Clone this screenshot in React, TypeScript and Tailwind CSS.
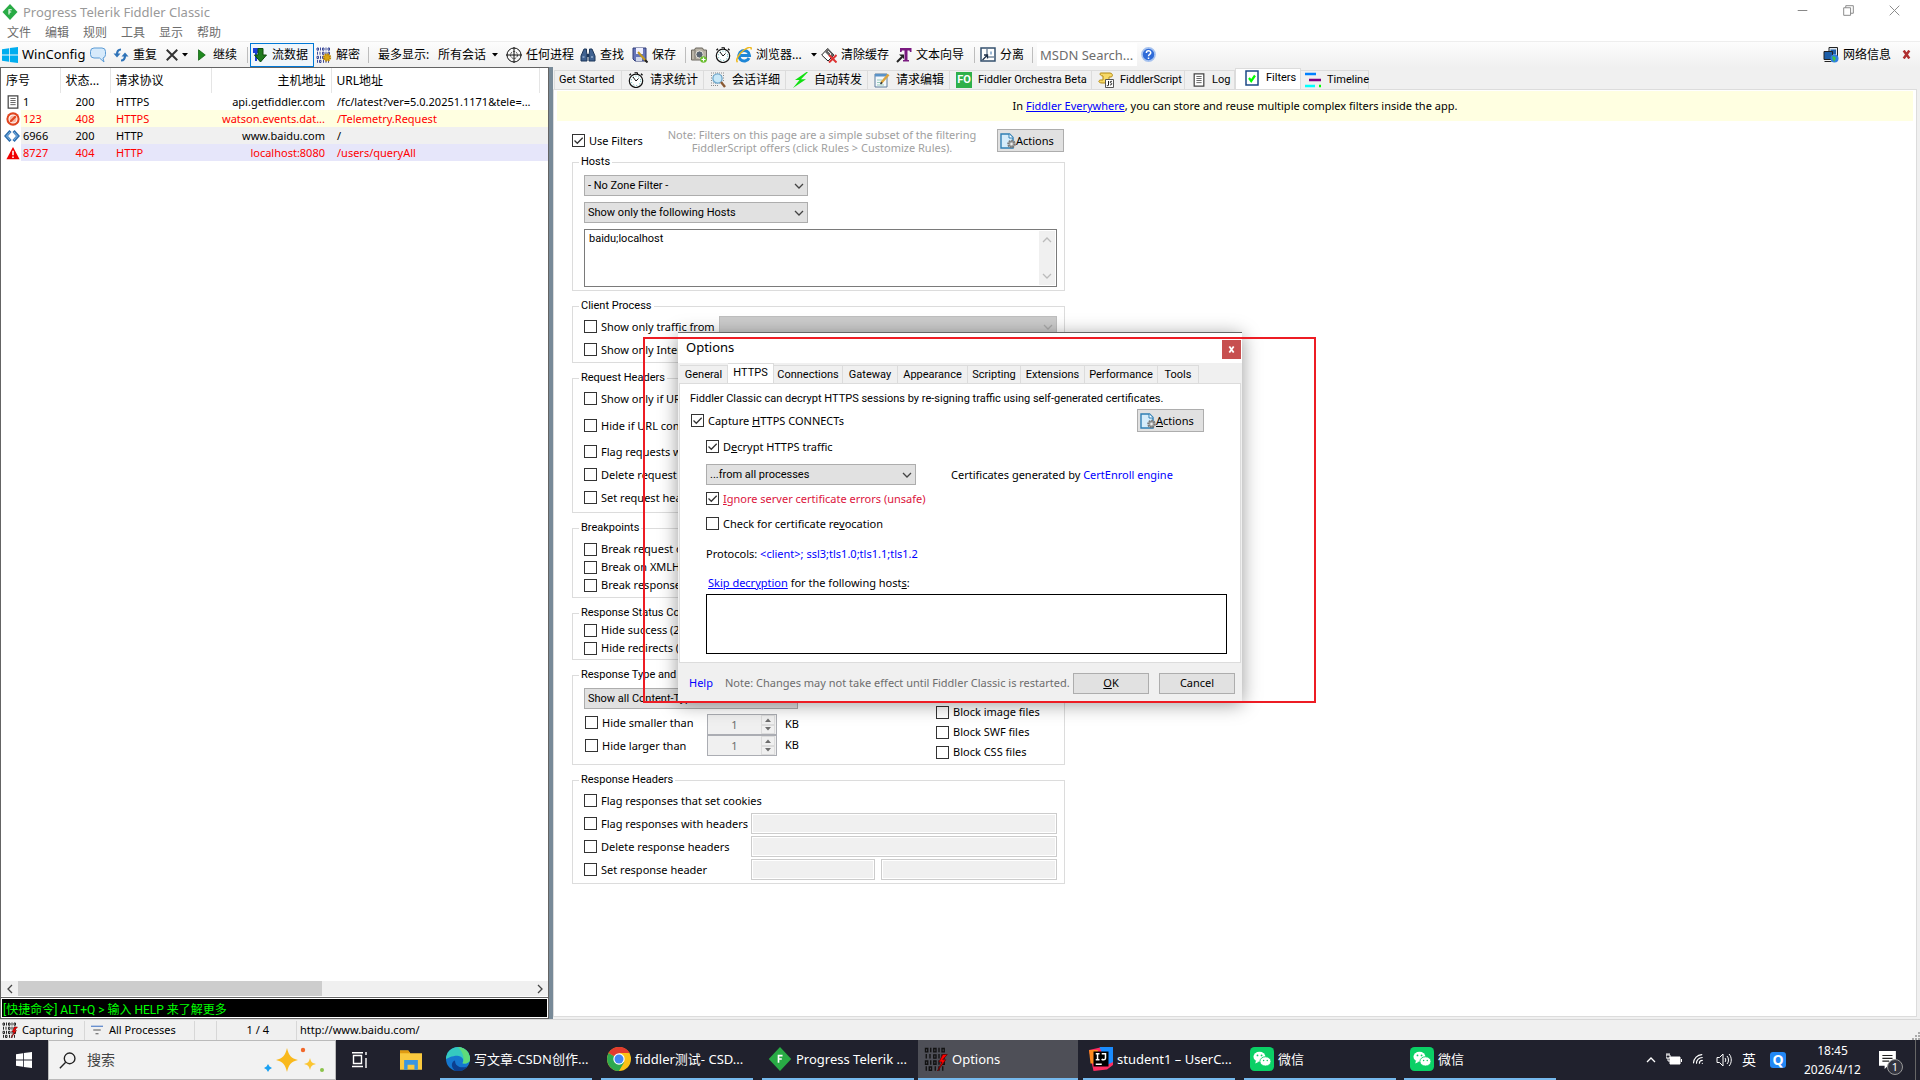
import type { ReactNode } from "react";
import { Wifi } from "lucide-react";

interface Session {
  id: string;
  result: string;
  protocol: string;
  host: string;
  url: string;
  icon: ReactNode;
  row: string;
}

const sessions: Session[] = [
  { id: "1", result: "200", protocol: "HTTPS", host: "api.getfiddler.com", url: "/fc/latest?ver=5.0.20251.1171&tele=...", icon: <DocIcon />, row: "text-black" },
  { id: "123", result: "408", protocol: "HTTPS", host: "watson.events.dat...", url: "/Telemetry.Request", icon: <BlockedIcon />, row: "text-[#ff0000] bg-[#ffffe1]" },
  { id: "6966", result: "200", protocol: "HTTP", host: "www.baidu.com", url: "/", icon: <CodeIcon />, row: "text-black bg-[#f0f0f0]" },
  { id: "8727", result: "404", protocol: "HTTP", host: "localhost:8080", url: "/users/queryAll", icon: <WarnIcon />, row: "text-[#ff0000] bg-[#e6e6fa]" },
];

/* ---------- icons ---------- */

function Svg({ children, className = "size-4" }: { children: ReactNode; className?: string }) {
  return (
    <svg viewBox="0 0 16 16" className={`shrink-0 ${className}`} fill="none">
      {children}
    </svg>
  );
}

function DocIcon() {
  return (
    <Svg className="size-[14px]">
      <path d="M2.5 1h11v14h-11z" fill="#fff" stroke="#444" strokeWidth="1.4" />
      <path d="M5 4h6M5 6.3h6M5 8.6h6M5 11h6" stroke="#555" />
    </Svg>
  );
}

function BlockedIcon() {
  return (
    <Svg className="size-[14px]">
      <circle cx="8" cy="8" r="7.6" fill="#e0451f" />
      <circle cx="8" cy="8" r="4.6" fill="#f8b9a6" stroke="#fff" strokeWidth="1.2" />
      <path d="m4.8 11.2 6.4-6.4" stroke="#e0451f" strokeWidth="2.4" />
    </Svg>
  );
}

function CodeIcon() {
  return (
    <Svg>
      <path d="M6.500 3 2 8l4.500 5M9.500 3 14 8l-4.500 5" stroke="#2f6fae" strokeWidth="3" />
      <path d="M6.200 4 2.600 8l3.600 4M9.800 4l3.600 4-3.600 4" stroke="#8ac0ee" />
    </Svg>
  );
}

function WarnIcon() {
  return (
    <Svg className="size-[14px]">
      <path d="M8 1 15.500 15H.5z" fill="#f00000" />
      <path d="M8 5.500v5M8 12v1.800" stroke="#fff" strokeWidth="1.800" />
    </Svg>
  );
}

function FiddlerIcon({ className }: { className?: string }) {
  return (
    <Svg className={className}>
      <path d="M8 0l7.500 8L8 16 .5 8z" fill="#29ab45" />
      <path d="M7 10.500V5.700h2.700M7 8h2.200" stroke="#fff" strokeWidth="1.100" />
    </Svg>
  );
}

function WindowsIcon({ color, className }: { color: string; className?: string }) {
  return (
    <Svg className={className}>
      <path d="M0 2.200 7 1.200v6.400H0zM7.800 1.100 16 0v7.600H7.800zM0 8.400h7v6.400l-7-1zM7.800 8.400H16V16l-8.200-1.100z" fill={color} />
    </Svg>
  );
}

function BubbleIcon() {
  return (
    <Svg>
      <path d="M4 1h8a3.500 3.500 0 0 1 3.500 3.500v3A3.500 3.500 0 0 1 13 11l1 4-4.500-4H4A3.500 3.500 0 0 1 .5 7.500v-3A3.500 3.500 0 0 1 4 1z" fill="#d6eafb" stroke="#5b9bd5" />
    </Svg>
  );
}

function ReplayIcon() {
  return (
    <Svg>
      <path d="M8 2.500C5 2.500 4 4 4 7.500M8 13.500c3 0 4-2 4-5" stroke="#2f73b8" strokeWidth="2.200" />
      <path d="M.5 6.500h7L4 10.500zM8.500 9.500h7L12 5.500z" fill="#2f73b8" />
    </Svg>
  );
}

function CrossIcon() {
  return (
    <Svg className="size-3">
      <path d="M1 1l14 14M15 1 1 15" stroke="#333" strokeWidth="2.600" />
    </Svg>
  );
}

function PlayIcon() {
  return (
    <Svg className="size-3">
      <path d="M2 1l9 7-9 7z" fill="#1f8a1f" stroke="#0d5e0d" />
    </Svg>
  );
}

function StreamIcon() {
  return (
    <Svg>
      <path d="M1 1h6v5H5v8H3V6H1z" fill="#1c3fd8" />
      <path d="M6 1.500h5V8h3.500L8.500 15 2.500 8H6z" fill="#1e7a1e" stroke="#0c4a0c" />
    </Svg>
  );
}

function BitsIcon({ gear = false, bolt = false, className }: { gear?: boolean; bolt?: boolean; className?: string }) {
  return (
    <Svg className={className}>
      <path
        d="M1 1h1.500v2.200H1zM4.500 .5v3M6.500 1H8v2.200H6.500zM10 .5v3M12 1h1.500v2.200H12zM1.500 4.700v3M4 4.700v3M6.500 5.200H8v2.200H6.500zM10 4.700v3M12 5.200h1.500v2.200H12zM1 9.300h1.500v2.200H1zM4.500 8.800v3M6.500 9.300H8v2.200H6.500zM10 8.800v3M12 9.300h1.500v2.200H12zM1.500 12.800v3M3.500 13.300H5v2.200H3.500zM7.500 12.800v3M10 12.800v3M12.500 12.800v3"
        stroke={gear ? "#27368f" : "#111"}
        strokeWidth=".9"
      />
      {gear && <circle cx="11" cy="10.500" r="3.200" fill="#d9a514" stroke="#b88408" strokeWidth="2" strokeDasharray="1.500 1" />}
      {bolt && <path d="M12.500 5 10 10h2l-3 6 5.500-7.500h-2L15.500 5z" fill="#f00" stroke="#600" strokeWidth=".5" />}
    </Svg>
  );
}

function TargetIcon() {
  return (
    <Svg>
      <circle cx="8" cy="8" r="7" stroke="#111" />
      <circle cx="8" cy="8" r="3.500" stroke="#444" strokeDasharray="2 1" />
      <path d="M8 0v16M0 8h16" stroke="#111" />
    </Svg>
  );
}

function BinocularsIcon() {
  return (
    <Svg>
      <path d="M4 2h2.500v3L7 7v7H1V9zM9.500 2H12l3 7v5H9V7l.5-2z" fill="#3f6190" stroke="#1d3658" />
      <path d="M7 7h2v3H7z" fill="#1d3658" />
      <path d="M2.500 10h2M11 10h2" stroke="#bcd2ee" />
    </Svg>
  );
}

function SaveIcon() {
  return (
    <Svg>
      <path d="M1 1h13v13H3l-2-2z" fill="#6675b8" stroke="#303c78" />
      <path d="M4 1h7v6H4z" fill="#eef" />
      <path d="M4 10h6v4H4z" fill="#cfd6ea" />
      <path d="m6 5 8 9" stroke="#c49a1c" strokeWidth="2" />
      <path d="m13 13 2.500 2.500" stroke="#222" strokeWidth="2" />
    </Svg>
  );
}

function CameraIcon() {
  return (
    <Svg>
      <path d="M.5 3h3l1-2h7l1 2h3v10H.5z" fill="#b9b3a6" stroke="#6b675e" />
      <path d="M4 3v9" stroke="#77736a" />
      <circle cx="8.500" cy="7.500" r="3.600" fill="#59636f" stroke="#e6e3dc" />
      <circle cx="12.500" cy="12.500" r="3.300" fill="#6abf2e" />
      <path d="M12.500 10.500v4M10.500 12.500h4" stroke="#fff" strokeWidth="1.200" />
    </Svg>
  );
}

function ClockIcon() {
  return (
    <Svg>
      <path d="M6.500 .7h3v1.500" stroke="#111" />
      <circle cx="8" cy="8.800" r="6.700" fill="#fff" stroke="#111" strokeWidth="1.200" />
      <circle cx="8" cy="8.800" r="4.700" stroke="#4aa" strokeDasharray="1 2" />
      <path d="M5 5 8 9l2.500-2.500" stroke="#111" />
      <path d="m13 1.800 1.500 1.500M3 1.800 1.500 3.300" stroke="#111" strokeWidth="1.400" />
    </Svg>
  );
}

function IeIcon() {
  return (
    <Svg>
      <path d="M13 11A5.300 5.300 0 1 1 13.500 8.500H4.500" stroke="#1e86d6" strokeWidth="3" />
      <path d="M1.500 15.300C-.8 13 3 6.500 8 3s8-3.500 7-.5" stroke="#f0b91d" strokeWidth="1.500" />
    </Svg>
  );
}

function EraseIcon() {
  return (
    <Svg>
      <path d="M.7 8l6-6.500L13 8l-6 6z" fill="#fff" stroke="#222" />
      <path d="M4 5l3-3.500L13 8l-3 3z" fill="#666" />
      <path d="m7 4 3 3-2 2" stroke="#eee" />
      <path d="m8 8 7.500 7.500M15.500 8 8 15.500" stroke="#d33" strokeWidth="2" />
    </Svg>
  );
}

function TextWizardIcon() {
  return (
    <Svg>
      <path d="M4 1h11.500v4H14l-.5-1.500h-2V13H13v1.500H7V13h1.500V3.500H6L5.500 5H4z" fill="#7a1a80" />
      <path d="m1 15 5-5" stroke="#222" strokeWidth="2" />
      <path d="M3 7.500h5V12z" fill="#222" />
    </Svg>
  );
}

function DetachIcon() {
  return (
    <Svg>
      <path d="M1 1h14v13H1z" fill="#fff" stroke="#34506e" strokeWidth="1.500" />
      <path d="M7 2v8h7" stroke="#34506e" />
      <path d="M10 4.500h2v3h-2z" fill="#9bb7d4" />
      <path d="m2.500 13 5-5m-3.500 0h3.500v3.500" stroke="#1f3148" strokeWidth="1.300" />
    </Svg>
  );
}

function HelpIcon() {
  return (
    <Svg className="size-[15px]">
      <circle cx="8" cy="8" r="7" fill="#2f6bd8" stroke="#a6c2ef" strokeWidth="1.800" />
      <path d="M5.700 6.300c0-3 4.700-3 4.700-.2C10.400 8 8 7.800 8 9.800M8 11.200v1.500" stroke="#fff" strokeWidth="1.600" />
    </Svg>
  );
}

function NetworkIcon() {
  return (
    <Svg>
      <path d="M6 .5h8.500v10H6z" fill="#dfe6ee" stroke="#222" />
      <path d="M7.500 2.500h5.500v5H7.500z" fill="#1c5ea8" />
      <path d="M1 4.500h8.500v8H1z" fill="#1c5ea8" stroke="#222" />
      <path d="M1.500 14.500h7" stroke="#222" />
      <circle cx="11.500" cy="11.500" r="4" fill="#2f7fe0" />
      <path d="M9.500 9c1 .5 2 0 3 1.500s-1 2-1 4.500c-1-1-2.500-3.500-2-6z" fill="#3fc13f" />
    </Svg>
  );
}

function InspectIcon() {
  return (
    <Svg>
      <path d="M1 1h14M1 3.500h14M1 6h14M1 8.500h14M1 11h10M1 13.500h8" stroke="#888" strokeDasharray="1 1" />
      <circle cx="7.500" cy="6.500" r="4.600" fill="#c8e8f8" stroke="#6fa8cc" strokeWidth="1.300" />
      <path d="m11 10 4 5" stroke="#8a5a34" strokeWidth="2.400" />
    </Svg>
  );
}

function BoltIcon() {
  return (
    <Svg>
      <path d="M14.500 0 3 8h4.500L1 16 14 7.200H9L16 0z" fill="#10e010" />
    </Svg>
  );
}

function ComposeIcon() {
  return (
    <Svg>
      <path d="M1 2h12v13H1z" fill="#f4f8fc" stroke="#5c7c9c" />
      <path d="M1 2h12v2.500H1z" fill="#5a93c8" />
      <path d="M3 8h5M3 10.500h4M3 13h7" stroke="#9cb" />
      <path d="m7.500 10.500 7-8" stroke="#d9a441" strokeWidth="2.600" />
      <path d="m6.500 12 1.600-1.600" stroke="#333" strokeWidth="1.600" />
    </Svg>
  );
}

function ScriptIcon() {
  return (
    <Svg>
      <path d="M3 1h9c3 0 3 4 1 4h-2v6H4c-4 0-4-3-1-3h2V4C2 4 1 1 3 1z" fill="#f7d967" stroke="#b48a12" />
      <path d="M7.500 7.500h8v8h-8z" fill="#fff" stroke="#555" />
      <path d="M10.500 9v4c0 1-1.500 1-1.500 0M14 9.500c-2-.8-2.500 1.200-1 1.500s.8 2.300-1 1.800" stroke="#222" />
    </Svg>
  );
}

function FilterTickIcon() {
  return (
    <Svg>
      <path d="M2 1h12v14H2z" fill="#fff" stroke="#1c4a86" strokeWidth="1.500" />
      <path d="m5 8 2.200 3L11 5.500" stroke="#0f0" strokeWidth="2.200" />
    </Svg>
  );
}

function TimelineIcon() {
  return (
    <Svg>
      <path d="M0 2h11" stroke="#0080ff" strokeWidth="2.500" />
      <path d="M4 8h12" stroke="#800080" strokeWidth="2.500" />
      <path d="M0 14h10" stroke="#0ff" strokeWidth="2.500" />
      <path d="M14 14h2" stroke="#0f0" strokeWidth="2.500" />
    </Svg>
  );
}

function PageGearIcon() {
  return (
    <Svg>
      <path d="M1 1h8.500L13 4.500V15H1z" fill="#d5ecfa" stroke="#2f7fb4" strokeWidth="1.400" />
      <path d="M9 1v4h4" stroke="#2f7fb4" fill="#fff" />
      <circle cx="11.500" cy="11" r="3.200" fill="#aaa" stroke="#777" strokeWidth="2.200" strokeDasharray="1.600 .8" />
      <circle cx="11.500" cy="11" r="1.200" fill="#eee" />
    </Svg>
  );
}

function Chevron({ up = false, className = "" }: { up?: boolean; className?: string }) {
  return (
    <svg viewBox="0 0 10 6" className={`w-[10px] h-[6px] shrink-0 ${className}`} fill="none" stroke="currentColor" strokeWidth="1.300">
      <path d={up ? "M1 5l4-4 4 4" : "M1 1l4 4 4-4"} />
    </svg>
  );
}

function Caret({ className = "" }: { className?: string }) {
  return (
    <svg viewBox="0 0 6 4" className={`w-[6px] h-1 shrink-0 ${className}`} fill="currentColor">
      <path d="M0 0h6L3 3.500z" />
    </svg>
  );
}

/* ---------- controls ---------- */

function Check({ children, checked = false, className = "" }: { children: ReactNode; checked?: boolean; className?: string }) {
  return (
    <label className={`flex items-center gap-1 whitespace-nowrap ${className}`}>
      <span className="relative grid size-[13px] shrink-0">
        <input type="checkbox" defaultChecked={checked} className="peer size-[13px] appearance-none border border-[#333] bg-white" />
        <svg viewBox="0 0 13 13" className="pointer-events-none absolute inset-0 hidden peer-checked:block" fill="none" stroke="#333" strokeWidth="1.300">
          <path d="M2.500 6.500 5.300 9.300 10.700 3.700" />
        </svg>
      </span>
      <span>{children}</span>
    </label>
  );
}

function Combo({ value, label, className = "" }: { value: string; label: string; className?: string }) {
  return (
    <div className={`relative ${className}`}>
      <select aria-label={label} className="block h-[21px] w-full appearance-none border border-[#adadad] bg-[#e1e1e1] pl-[3px] font-['Roboto',sans-serif] leading-[19px]">
        <option>{value}</option>
      </select>
      <Chevron className="pointer-events-none absolute right-1 top-2 text-[#444]" />
    </div>
  );
}

function Group({ title, children, className = "" }: { title: string; children: ReactNode; className?: string }) {
  return (
    <fieldset className={`min-w-0 border border-[#dcdcdc] pl-[11px] pr-[7px] ${className}`}>
      <legend className="-ml-[5px] px-[2px] font-['Roboto',sans-serif] leading-4">{title}</legend>
      {children}
    </fieldset>
  );
}

function Field({ label, className = "" }: { label: string; className?: string }) {
  return <input aria-label={label} disabled className={`h-[21px] min-w-0 border border-[#ccc] bg-[#f0f0f0] shadow-[inset_0_0_0_1px_#fff] ${className}`} />;
}

function Spinner({ label }: { label: string }) {
  return (
    <div className="flex h-[21px] w-[70px] border border-[#abadb3] bg-[#f0f0f0] text-[#6d6d6d]">
      <input aria-label={label} defaultValue="1" className="w-[53px] text-center" />
      <div className="flex w-[14px] flex-col items-stretch">
        <button aria-label={`${label} up`} className="flex flex-1 items-center justify-center border border-[#dcdcdc]"><Caret className="rotate-180" /></button>
        <button aria-label={`${label} down`} className="flex flex-1 items-center justify-center border border-[#dcdcdc]"><Caret /></button>
      </div>
    </div>
  );
}

function ActionsButton({ children }: { children: ReactNode }) {
  return (
    <button className="flex h-[23px] w-[67px] items-center border border-[#adadad] bg-[#e1e1e1] pl-[2px]">
      <PageGearIcon />
      <span>{children}</span>
    </button>
  );
}

function Tool({ icon, children, className = "" }: { icon?: ReactNode; children?: ReactNode; className?: string }) {
  return (
    <button className={`flex h-6 shrink-0 items-center gap-1 whitespace-nowrap ${className}`}>
      {icon}
      {children}
    </button>
  );
}

function Sep() {
  return <span className="h-4 w-px shrink-0 bg-[#bdbdbd]" />;
}

/* ---------- main window ---------- */

function TitleBar() {
  return (
    <header className="bg-white">
      <div className="flex h-6 items-center pl-[2px] text-[#999]">
        <FiddlerIcon />
        <h1 className="flex-1 pl-[5px] text-[13px]">Progress Telerik Fiddler Classic</h1>
        <div className="flex h-5 items-center gap-[35px] self-start pr-5 text-[#888]">
          <button aria-label="Minimize"><Svg className="size-[11px]"><path d="M1 8h14" stroke="currentColor" strokeWidth="1.500" /></Svg></button>
          <button aria-label="Restore"><Svg className="size-[11px]"><path d="M1 4h10v11H1zM4 4V1h11v11h-4" stroke="currentColor" strokeWidth="1.400" /></Svg></button>
          <button aria-label="Close"><Svg className="size-[11px]"><path d="m1 1 14 14M15 1 1 15" stroke="currentColor" strokeWidth="1.400" /></Svg></button>
        </div>
      </div>
      <nav className="flex h-[17px] items-center gap-[14px] pl-[7px] text-xs text-[#6d6d6d]">
        {["文件", "编辑", "规则", "工具", "显示", "帮助"].map((m) => (
          <button key={m}>{m}</button>
        ))}
      </nav>
    </header>
  );
}

function Toolbar() {
  return (
    <div className="flex h-[26px] items-center border-t border-[#eee] bg-linear-to-b from-[#fdfdfd] to-[#f0f0f0] pl-[2px] text-xs">
      <Tool icon={<WindowsIcon color="#00adef" />} className="w-[88px] text-[13px]">WinConfig</Tool>
      <Tool icon={<BubbleIcon />} className="w-[23px]" />
      <Tool icon={<ReplayIcon />} className="w-[53px]">重复</Tool>
      <Tool icon={<CrossIcon />} className="w-[31px]"><Caret /></Tool>
      <Tool icon={<PlayIcon />} className="w-[50px]">继续</Tool>
      <Sep />
      <Tool icon={<StreamIcon />} className="mx-[2px] w-16 border border-[#0078d7] bg-[#f0f6fb] pl-[1px]">流数据</Tool>
      <Tool icon={<BitsIcon gear />} className="w-[52px]">解密</Tool>
      <Sep />
      <Tool className="w-[69px] pl-[9px]">最多显示:</Tool>
      <Tool className="w-[68px]"><span className="pr-[2px]">所有会话</span><Caret /></Tool>
      <Tool icon={<TargetIcon />} className="w-[74px]">任何进程</Tool>
      <Tool icon={<BinocularsIcon />} className="w-[52px]">查找</Tool>
      <Tool icon={<SaveIcon />} className="w-[53px]">保存</Tool>
      <Sep />
      <Tool icon={<CameraIcon />} className="w-[29px] pl-[5px]" />
      <Tool icon={<ClockIcon />} className="w-[21px]" />
      <Tool icon={<IeIcon />} className="w-[75px]">浏览器...</Tool>
      <Tool className="w-[10px]"><Caret /></Tool>
      <Tool icon={<EraseIcon />} className="w-[75px]">清除缓存</Tool>
      <Tool icon={<TextWizardIcon />} className="w-[78px]">文本向导</Tool>
      <Sep />
      <Tool icon={<DetachIcon />} className="w-[57px] pl-[5px]">分离</Tool>
      <Sep />
      <input aria-label="MSDN Search" placeholder="MSDN Search..." className="mx-1 h-[23px] w-[100px] bg-white pl-[3px] text-[13px] placeholder:text-[#6d6d6d]" />
      <Tool icon={<HelpIcon />} />
      <span className="flex-1" />
      <Tool icon={<NetworkIcon />} className="w-[78px]">网络信息</Tool>
      <button aria-label="Close toolbar" className="mr-2 flex size-[11px] items-center justify-center">
        <Svg className="size-[9px]"><path d="m3 1 10 14M13 1 3 15" stroke="#b03030" strokeWidth="4.500" /></Svg>
      </button>
    </div>
  );
}

function SessionList() {
  return (
    <section className="flex w-[549px] shrink-0 flex-col border-r border-[#646464]">
      <div className="flex flex-1 flex-col overflow-hidden border-l border-t border-b border-[#646464] bg-white">
        <table className="w-full table-fixed border-collapse text-xs">
          <colgroup>
            <col className="w-[59px]" />
            <col className="w-[50px]" />
            <col className="w-[101px]" />
            <col className="w-[120px]" />
            <col className="w-[208px]" />
            <col />
          </colgroup>
          <thead>
            <tr className="h-[25px] [&>th]:border-r [&>th]:border-[#e5e5e5] [&>th]:px-[5px] [&>th]:font-normal">
              <th className="text-left">序号</th>
              <th className="text-left">状态...</th>
              <th className="text-left">请求协议</th>
              <th className="text-right">主机地址</th>
              <th className="text-left">URL地址</th>
              <th className="border-none!" />
            </tr>
          </thead>
          <tbody className="text-[11px]">
            {sessions.map((s) => (
              <tr key={s.id} className={`h-[17px] whitespace-nowrap leading-[17px] ${s.row}`}>
                <td className="p-0">
                  <div className="flex">
                    <span className="flex h-[17px] w-5 items-center justify-end bg-white pr-[1px]">{s.icon}</span>
                    <span className="pl-[2px]">{s.id}</span>
                  </div>
                </td>
                <td className="p-0 text-center">{s.result}</td>
                <td className="p-0 pl-[6px]">{s.protocol}</td>
                <td className="p-0 pr-[6px] text-right">{s.host}</td>
                <td className="p-0 pl-[6px]">{s.url}</td>
                <td className="p-0" />
              </tr>
            ))}
          </tbody>
        </table>
        <div className="flex-1" />
        <div className="flex h-[15px] items-center bg-[#f0f0f0] text-[#444]">
          <button aria-label="Scroll left" className="flex w-[17px] justify-center"><Chevron className="rotate-90" /></button>
          <div className="h-full w-[304px] bg-[#cdcdcd]" />
          <span className="flex-1" />
          <button aria-label="Scroll right" className="flex w-[17px] justify-center"><Chevron className="-rotate-90" /></button>
        </div>
        <div className="h-px" />
      </div>
      <div className="border border-[#646464] border-r-0 border-t-0 bg-white p-px">
        <input
          aria-label="QuickExec"
          defaultValue="[快捷命令] ALT+Q > 输入 HELP 来了解更多"
          className="block h-[18px] w-full bg-black pl-px font-['Roboto','Noto_Sans_CJK_SC',sans-serif] text-xs text-[#00ff00]"
        />
      </div>
    </section>
  );
}

function Tab({ icon, children, className, active = false }: { icon?: ReactNode; children: ReactNode; className: string; active?: boolean }) {
  return (
    <button
      role="tab"
      aria-selected={active}
      className={`flex shrink-0 items-center gap-[6px] whitespace-nowrap border-r border-t border-[#dcdcdc] ${
        active ? "-mb-px h-[22px] border-l bg-white pb-[3px]" : "h-[19px] bg-[#f0f0f0]"
      } ${className}`}
    >
      {icon}
      {children}
    </button>
  );
}

function FiltersPage() {
  return (
    <div className="flex-1 px-[3px] pt-px">
      <p className="h-[30px] bg-[#ffffe1] text-center leading-[30px]">
        In <a href="#everywhere" className="text-[#0000ff] underline">Fiddler Everywhere</a>, you can store and reuse multiple complex filters inside the app.
      </p>
      <div className="ml-[15px] w-[493px] pt-2">
        <div className="flex h-[23px] items-center justify-between pr-[1px]">
          <Check checked className="w-[75px]">Use Filters</Check>
          <p className="text-center leading-[13px] text-[#a0a0a0]">
            Note: Filters on this page are a simple subset of the filtering
            <br />
            FiddlerScript offers (click Rules &gt; Customize Rules).
          </p>
          <ActionsButton>Actions</ActionsButton>
        </div>

        <Group title="Hosts" className="mt-[2px] pb-[3px] pt-[5px]">
          <div className="flex flex-col gap-[6px]">
            <Combo label="Zone filter" value="- No Zone Filter -" className="w-[224px]" />
            <Combo label="Host filter" value="Show only the following Hosts" className="w-[224px]" />
            <div className="flex h-[58px] border border-[#7a7a7a] p-px">
              <textarea aria-label="Hosts" defaultValue="baidu;localhost" className="flex-1 resize-none pl-[3px] font-['Roboto',sans-serif] leading-4" />
              <div className="flex w-4 flex-col items-center justify-between bg-[#f0f0f0] py-[6px] text-[#bbb]">
                <Chevron up />
                <Chevron />
              </div>
            </div>
          </div>
        </Group>

        <Group title="Client Process" className="mt-[7px] pb-px pt-px">
          <div className="flex h-[23px] items-center">
            <Check className="w-[135px]">Show only traffic from</Check>
            <div className="relative flex-1">
              <select aria-label="Process" disabled className="block h-[21px] w-full appearance-none border border-[#bfbfbf] bg-[#ccc]" />
              <Chevron className="pointer-events-none absolute right-1 top-2 text-[#aaa]" />
            </div>
          </div>
          <Check className="h-[23px]">Show only Internet Explorer traffic</Check>
        </Group>

        <Group title="Request Headers" className="mt-[7px] pb-[3px] pt-px">
          <Check className="h-[23px]">Show only if URL contains</Check>
          <Check className="mt-1 h-[23px]">Hide if URL contains</Check>
          <Check className="mt-[3px] h-[23px]">Flag requests with headers</Check>
          <Check className="h-[23px]">Delete request headers</Check>
          <Check className="h-[23px]">Set request header</Check>
        </Group>

        <Group title="Breakpoints" className="mt-[7px] pb-[3px] pt-1">
          <Check className="h-[18px]">Break request on POST</Check>
          <Check className="h-[18px]">Break on XMLHttpRequest</Check>
          <Check className="h-[18px]">Break response on Content-Type</Check>
        </Group>

        <Group title="Response Status Code" className="mt-[7px] pb-[2px]">
          <Check className="h-[18px]">Hide success (2xx)</Check>
          <Check className="h-[18px]">Hide redirects (300,301,302,303,307)</Check>
        </Group>

        <Group title="Response Type and Size" className="mt-[7px] pb-[2px]">
          <div className="flex justify-between">
            <div className="pt-[5px]">
              <Combo label="Content types" value="Show all Content-Types" className="w-[214px]" />
              <div className="flex">
                <div className="w-[123px] pl-px pt-[2px]">
                  <Check className="h-[23px]">Hide smaller than</Check>
                  <Check className="h-[23px]">Hide larger than</Check>
                </div>
                <div className="pt-[5px]">
                  <Spinner label="Minimum size" />
                  <Spinner label="Maximum size" />
                </div>
                <div className="pl-2 pt-1 leading-[21px]">
                  <p>KB</p>
                  <p>KB</p>
                </div>
              </div>
            </div>
            <div className="w-[121px] pt-[19px]">
              <Check className="h-5">Block image files</Check>
              <Check className="h-5">Block SWF files</Check>
              <Check className="h-5">Block CSS files</Check>
            </div>
          </div>
        </Group>

        <Group title="Response Headers" className="mt-[7px] pb-[2px] pt-px">
          <Check className="h-[23px]">Flag responses that set cookies</Check>
          <div className="flex h-[23px] items-center">
            <Check className="w-[167px]">Flag responses with headers</Check>
            <Field label="Flag header" className="flex-1" />
          </div>
          <div className="flex h-[23px] items-center">
            <Check className="w-[167px]">Delete response headers</Check>
            <Field label="Delete header" className="flex-1" />
          </div>
          <div className="flex h-[23px] items-center">
            <Check className="w-[167px]">Set response header</Check>
            <Field label="Header name" className="mr-[6px] w-[124px]" />
            <Field label="Header value" className="flex-1" />
          </div>
        </Group>
      </div>
    </div>
  );
}

function RightPane() {
  return (
    <section className="flex min-w-0 flex-1 flex-col">
      <div role="tablist" className="flex h-[22px] items-end pl-px font-['Roboto','Noto_Sans_CJK_SC',sans-serif]">
        <Tab className="w-[68px] border-l pl-1">Get Started</Tab>
        <Tab icon={<ClockIcon />} className="w-[82px] pl-[6px] text-xs">请求统计</Tab>
        <Tab icon={<InspectIcon />} className="w-[82px] pl-[6px] text-xs">会话详细</Tab>
        <Tab icon={<BoltIcon />} className="w-[82px] pl-[6px] text-xs">自动转发</Tab>
        <Tab icon={<ComposeIcon />} className="w-[82px] pl-[6px] text-xs">请求编辑</Tab>
        <Tab icon={<span className="flex size-4 items-center justify-center bg-[#2eb04a] text-[11px] font-bold text-white">FO</span>} className="w-[142px] pl-[6px]">Fiddler Orchestra Beta</Tab>
        <Tab icon={<ScriptIcon />} className="w-[93px] pl-[6px]">FiddlerScript</Tab>
        <Tab icon={<DocIcon />} className="w-[50px] pl-[7px]">Log</Tab>
        <Tab icon={<FilterTickIcon />} active className="w-[66px] pl-2">Filters</Tab>
        <Tab icon={<TimelineIcon />} className="w-[68px] pl-1">Timeline</Tab>
      </div>
      <div className="mr-[3px] flex flex-1 flex-col border border-[#dcdcdc] bg-white">
        <FiltersPage />
      </div>
      <div className="h-[2px]" />
    </section>
  );
}

function StatusBar() {
  return (
    <footer className="flex h-[21px] items-center border-t border-[#d7d7d7] bg-[#f0f0f0] pl-[2px] [&>span]:h-[19px] [&>span]:items-center">
      <span className="flex w-[83px] gap-1 border-r border-[#d7d7d7]"><BitsIcon bolt />Capturing</span>
      <span className="flex w-[110px] gap-[6px] border-r border-[#d7d7d7] pl-[6px]">
        <Svg className="size-3"><path d="M0 3h16" stroke="#4a7ac8" strokeWidth="1.500" /><path d="M3 8h10M6 13h4" stroke="#555" strokeWidth="1.500" /></Svg>
        All Processes
      </span>
      <span className="flex w-[22px] border-r border-[#d7d7d7]" />
      <span className="flex w-20 justify-end border-r border-[#d7d7d7] pr-[27px]">1 / 4</span>
      <span className="flex flex-1 pl-[3px]">http://www.baidu.com/</span>
      <Svg className="size-2 self-end"><path d="M12 0h4v4h-4zM6 6h4v4H6zM12 6h4v4h-4zM0 12h4v4H0zM6 12h4v4H6zM12 12h4v4h-4z" fill="#aaa" /></Svg>
    </footer>
  );
}

/* ---------- options dialog ---------- */

const optionTabs = [
  { name: "General", width: "w-[48px]" },
  { name: "HTTPS", width: "w-[46px]" },
  { name: "Connections", width: "w-[69px]" },
  { name: "Gateway", width: "w-[55px]" },
  { name: "Appearance", width: "w-[70px]" },
  { name: "Scripting", width: "w-[53px]" },
  { name: "Extensions", width: "w-[64px]" },
  { name: "Performance", width: "w-[73px]" },
  { name: "Tools", width: "w-[41px]" },
];

function OptionsDialog() {
  return (
    <div role="dialog" aria-label="Options" className="absolute left-[678px] top-[332px] flex h-[369px] w-[564px] flex-col border-t border-[#666] bg-[#f0f0f0] shadow-[0_3px_18px_rgba(0,0,0,0.4)]">
      <div className="flex h-[30px] items-center justify-between bg-white pb-[2px] pl-2 pr-px">
        <h2 className="text-[13px]">Options</h2>
        <button aria-label="Close" className="mt-1 flex size-[19px] items-center justify-center bg-[#c75050]">
          <Svg className="size-[7px]"><path d="m3 1 10 14M13 1 3 15" stroke="#fff" strokeWidth="4" /></Svg>
        </button>
      </div>
      <div role="tablist" className="flex h-5 items-end pl-[2px] font-['Roboto',sans-serif]">
        {optionTabs.map((t) => (
          <button
            key={t.name}
            role="tab"
            aria-selected={t.name === "HTTPS"}
            className={`border-r border-t border-[#dcdcdc] text-center ${t.width} ${t.name === "HTTPS" ? "-mb-px h-[21px] bg-white pb-[3px]" : "h-[18px]"}`}
          >
            {t.name}
          </button>
        ))}
      </div>
      <div className="mx-[1px] flex h-[280px] flex-col border border-[#dcdcdc] bg-white pl-[10px]">
        <p className="pt-[7px] font-['Roboto',sans-serif] leading-4">Fiddler Classic can decrypt HTTPS sessions by re-signing traffic using self-generated certificates.</p>
        <div className="flex items-start justify-between pl-px pr-9 pt-[2px]">
          <Check checked className="h-[23px]">Capture <u>H</u>TTPS CONNECTs</Check>
          <ActionsButton><u>A</u>ctions</ActionsButton>
        </div>
        <div className="flex flex-col pl-4">
          <Check checked className="mt-[3px] h-[23px]">D<u>e</u>crypt HTTPS traffic</Check>
          <div className="flex items-center pt-[6px]">
            <Combo label="Process filter" value="...from all processes" className="w-[210px]" />
            <p className="pl-[35px]">Certificates generated by <a href="#engine" className="text-[#0000ff]">CertEnroll engine</a></p>
          </div>
          <Check checked className="mt-px h-[25px] text-[#dc143c]"><u>I</u>gnore server certificate errors (unsafe)</Check>
          <Check className="h-[25px]">Check for certificate re<u>v</u>ocation</Check>
          <p className="mt-[10px] leading-4">Protocols: <a href="#protocols" className="text-[#0000ff]">&lt;client&gt;; ssl3;tls1.0;tls1.1;tls1.2</a></p>
          <p className="mt-[13px] pl-[2px] leading-4"><a href="#skip" className="text-[#0000ff] underline">Skip decryption</a> for the following host<u>s</u>:</p>
          <textarea aria-label="Skip decryption hosts" className="mt-[3px] h-[60px] w-[521px] resize-none border border-black bg-white" />
        </div>
      </div>
      <div className="flex flex-1 items-center pl-[11px] pr-[7px] pt-[2px]">
        <a href="#help" className="w-9 text-[#0000ff]">Help</a>
        <p className="flex-1 whitespace-nowrap text-[#6d6d6d]">Note: Changes may not take effect until Fiddler Classic is restarted.</p>
        <button className="h-[21px] w-[76px] border border-[#adadad] bg-[#e1e1e1]"><u>O</u>K</button>
        <button className="ml-[10px] h-[21px] w-[76px] border border-[#adadad] bg-[#e1e1e1]">Cancel</button>
      </div>
    </div>
  );
}

/* ---------- taskbar ---------- */

function EdgeIcon() {
  return (
    <Svg className="size-6">
      <circle cx="8" cy="8" r="8" fill="#1577cf" />
      <path d="M0 8a8 8 0 0 1 16 0c0 2.500-2.500 3.500-5 2.800 1.600-2.400-.5-5-3.500-5C4 5.800 1 7.500 0 8z" fill="#35c9c0" />
      <path d="M8 0a8 8 0 0 1 8 8c0 2.500-2.500 3.500-5 2.800C13 8 11 3 8 0z" fill="#5fdc7a" />
      <path d="M6 9c0 4 4 5.500 8.200 4A8 8 0 0 1 6 15.800C2.500 13 4 9.500 6 9z" fill="#0c3f8f" />
    </Svg>
  );
}

function ChromeIcon() {
  return (
    <Svg className="size-6">
      <circle cx="8" cy="8" r="8" fill="#fbc116" />
      <path d="M8 8 1.100 4A8 8 0 0 0 8 16l3.500-6z" fill="#2da94f" />
      <path d="M1.100 4A8 8 0 0 1 15 4H8v4z" fill="#e33b2e" />
      <circle cx="8" cy="8" r="3.800" fill="#fff" />
      <circle cx="8" cy="8" r="3" fill="#4285f4" />
    </Svg>
  );
}

function IdeaIcon() {
  return (
    <Svg className="size-6">
      <path d="M0 2 9 0l7 3v9l-4 3-9 1z" fill="#ff2d62" />
      <path d="M7 0h9v10l-4 2z" fill="#1a8cff" />
      <path d="M0 2h6v9H1z" fill="#ff8a1f" />
      <path d="M3 3h10v10H3z" fill="#000" />
      <path d="M4.500 4.500h2.500M5.700 4.500v4M4.500 8.500h2.500M8.500 4.500h2.500v3c0 1.300-2 1.300-2.500.5M4.500 11.500h4" stroke="#fff" />
    </Svg>
  );
}

function WechatIcon() {
  return (
    <Svg className="size-6">
      <rect width="16" height="16" rx="3" fill="#0bd066" />
      <ellipse cx="6.300" cy="6.500" rx="4" ry="3.400" fill="#fff" />
      <path d="m3.500 11 .5-2 2 .8z" fill="#fff" />
      <ellipse cx="10.300" cy="9.600" rx="3.700" ry="3.100" fill="#fff" stroke="#0bd066" strokeWidth=".6" />
      <circle cx="5" cy="5.600" r=".6" fill="#0bd066" />
      <circle cx="7.700" cy="5.600" r=".6" fill="#0bd066" />
      <circle cx="9.100" cy="9" r=".5" fill="#0bd066" />
      <circle cx="11.500" cy="9" r=".5" fill="#0bd066" />
    </Svg>
  );
}

const tasks = [
  { name: "写文章-CSDN创作...", icon: <EdgeIcon />, style: "ml-[17px] w-[152px]" },
  { name: "fiddler测试- CSD...", icon: <ChromeIcon />, style: "ml-[9px] w-[152px]" },
  { name: "Progress Telerik ...", icon: <FiddlerIcon className="size-6" />, style: "ml-[9px] w-[152px]" },
  { name: "Options", icon: <BitsIcon bolt className="size-6" />, style: "ml-1 w-[160px] bg-[#4e4f57]" },
  { name: "student1 – UserC...", icon: <IdeaIcon />, style: "ml-[5px] w-[152px]" },
  { name: "微信", icon: <WechatIcon />, style: "ml-[9px] w-[152px]" },
  { name: "微信", icon: <WechatIcon />, style: "ml-2 w-[152px]" },
];

function Taskbar() {
  return (
    <nav className="flex h-10 shrink-0 items-center bg-[#20212d] text-white">
      <button aria-label="Start" className="flex w-12 justify-center"><WindowsIcon color="#fff" /></button>
      <label className="flex h-10 w-[288px] items-center border border-[#bbb] bg-[#f2f2f2] pl-[10px] text-[#333]">
        <Svg className="size-[17px]"><circle cx="10" cy="6" r="5" stroke="#222" strokeWidth="1.300" /><path d="M6.300 9.700.8 15.200" stroke="#222" strokeWidth="1.300" /></Svg>
        <input aria-label="搜索" placeholder="搜索" className="ml-[11px] min-w-0 flex-1 text-sm placeholder:text-[#444]" />
        <svg viewBox="0 0 62 26" className="mr-[10px] h-[26px] w-[62px]">
          <path d="M24 1c2 8 4 10 11 12-7 2-9 4-11 12-2-8-4-10-11-12 7-2 9-4 11-12z" fill="#f9b91c" />
          <path d="M47 11c1 4 2 5 6 6-4 1-5 2-6 6-1-4-2-5-6-6 4-1 5-2 6-6z" fill="#fbc531" />
          <path d="M5 17l1.500 2.500L9 21l-2.500 1.500L5 25l-1.500-2.500L1 21l2.500-1.500z" fill="#1ba1f2" />
          <circle cx="40" cy="3" r="2.200" fill="#f2682a" />
          <circle cx="59" cy="23" r="2" fill="#8bc34a" />
        </svg>
      </label>
      <button aria-label="Task view" className="flex w-[47px] justify-center">
        <Svg><path d="M1.500 3.500h8v8h-8zM0 .7h11M0 14.500h11M14 0v3M14 6v10" stroke="#fff" strokeWidth="1.400" /></Svg>
      </button>
      <button aria-label="File Explorer" className="ml-4 flex w-6 justify-center">
        <Svg className="size-[22px]"><path d="M0 1h6l1.500 2H16v12H0z" fill="#f9c93e" /><path d="M0 1h6l1.500 2H0z" fill="#e09b12" /><path d="M3 8h10v7h-2.500v-3.500h-5V15H3z" fill="#3a96e0" /></Svg>
      </button>
      {tasks.map((t, i) => (
        <button key={i} className={`flex h-10 shrink-0 items-center gap-1 whitespace-nowrap border-b-2 border-[#76b9ed] pl-[6px] text-[13px] ${t.style}`}>
          {t.icon}
          {t.name}
        </button>
      ))}
      <span className="flex-1" />
      <div className="flex items-center gap-[10px]">
        <Chevron up />
        <Svg><path d="M4 5h10v7H4z" fill="#fff" stroke="#fff" /><path d="M15.500 7v3M0 3h4v3H0zM1 1v2M3 1v2M2 6v3h2" stroke="#fff" /></Svg>
        <Wifi size={14} className="-rotate-45" />
        <Svg><path d="M1 5.500h2.500L7 2v12l-3.500-3.500H1z" stroke="#fff" /><path d="M9 6c1 1 1 3 0 4M11 4c2 2 2 6 0 8M13 2c3 3 3 9 0 12" stroke="#fff" /></Svg>
        <span className="text-sm">英</span>
        <span className="ml-1 flex size-4 items-center justify-center rounded-[3px] bg-[#2288f5] text-sm font-bold">Q</span>
      </div>
      <div className="w-[93px] text-center text-xs leading-[19px]">
        <p>18:45</p>
        <p>2026/4/12</p>
      </div>
      <button aria-label="Notifications" className="relative mr-[11px] flex w-[25px]">
        <Svg className="size-[18px]"><path d="M0 0h15v13H8l-3 3v-3H0z" fill="#fff" /><path d="M3 4h9M3 6.500h9M3 9h6" stroke="#222" /></Svg>
        <span className="absolute left-2 top-2 flex size-4 items-center justify-center rounded-full border border-[#999] bg-[#33343f] text-[11px]">1</span>
      </button>
      <span className="mr-1 h-10 w-px bg-[#666]" />
    </nav>
  );
}

export default function App() {
  return (
    <div className="relative flex h-screen flex-col overflow-hidden bg-[#f0f0f0] font-['Noto_Sans','Noto_Sans_CJK_SC',sans-serif] text-[11px] leading-4 text-black">
      <TitleBar />
      <Toolbar />
      <main className="flex flex-1">
        <SessionList />
        <div className="w-1 bg-[#788a98]" />
        <RightPane />
      </main>
      <StatusBar />
      <Taskbar />
      <OptionsDialog />
      {/* highlight frame around the dialog */}
      <div className="pointer-events-none absolute left-[643px] top-[337px] h-[366px] w-[673px] border-2 border-[#ed1c24]" />
    </div>
  );
}
